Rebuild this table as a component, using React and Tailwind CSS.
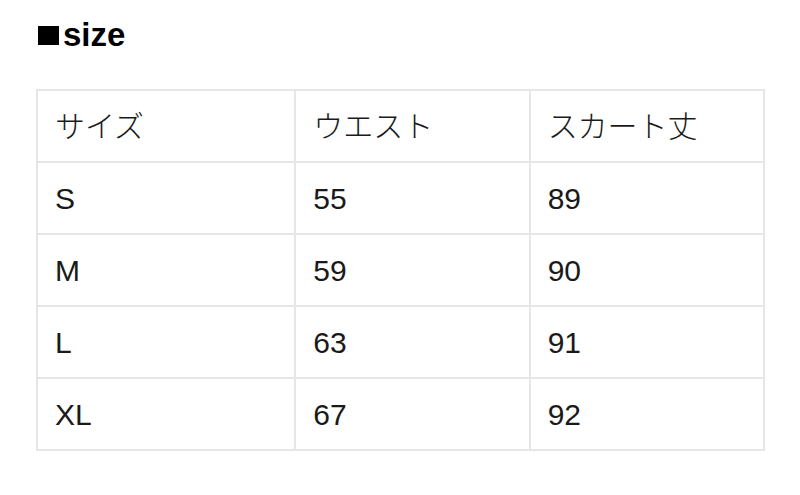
const rows = [
  ['サイズ', 'ウエスト', 'スカート丈'],
  ['S', '55', '89'],
  ['M', '59', '90'],
  ['L', '63', '91'],
  ['XL', '67', '92'],
];

const App = () => {
  return (
    <div
      className="w-[800px] h-[495px] bg-white text-black"
      style={{ fontFamily: '"Liberation Sans", "Noto Sans CJK JP", sans-serif' }}
    >
      <div className="pt-[20px] pl-[38px] h-[89px]">
        <h1 className="text-[33px] font-bold leading-[30px] flex items-center">
          <span className="inline-block w-[21px] h-[19px] bg-black mr-[4px]"></span>
          size
        </h1>
      </div>

      <table className="ml-[36px] w-[729px] border-collapse border-2 border-[#e6e6e6]">
        <colgroup>
          <col className="w-[259px]" />
          <col className="w-[235px]" />
          <col className="w-[235px]" />
        </colgroup>
        <tbody>
          {rows.map((row, i) => (
            <tr key={i} className="h-[72px]">
              {row.map((cell, j) => (
                <td
                  key={j}
                  className="border-2 border-[#e6e6e6] pl-[17px] text-[30px] font-light text-[#1a1a1a]"
                >
                  {cell}
                </td>
              ))}
            </tr>
          ))}
        </tbody>
      </table>
    </div>
  );
};

export default App;
